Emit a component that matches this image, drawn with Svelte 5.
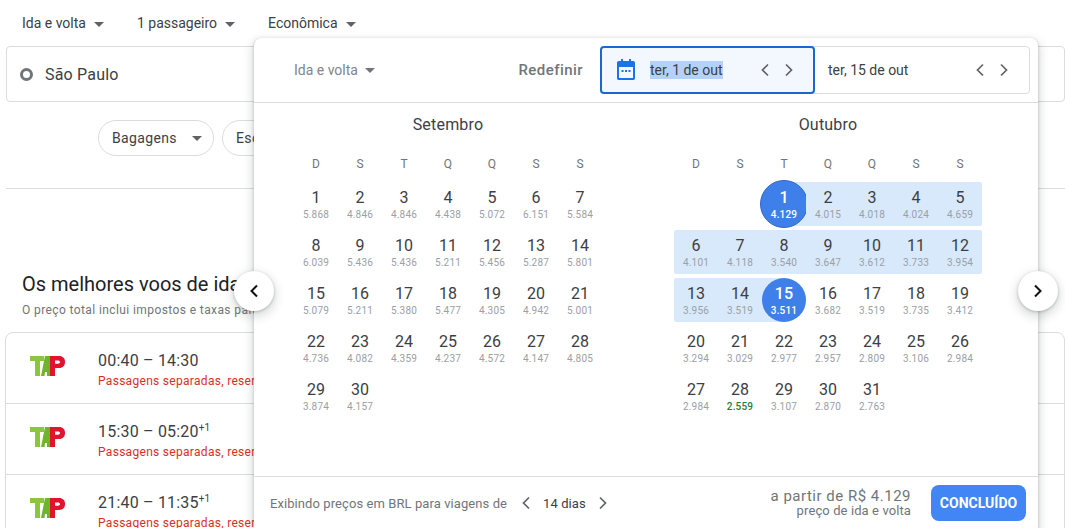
<script>
  const weekdays = ['D', 'S', 'T', 'Q', 'Q', 'S', 'S'];

  const setPrices = ['5.868','4.846','4.846','4.438','5.072','6.151','5.584','6.039','5.436','5.436','5.211','5.456','5.287','5.801','5.079','5.211','5.380','5.477','4.305','4.942','5.001','4.736','4.082','4.359','4.237','4.572','4.147','4.805','3.874','4.157'];
  const outPrices = ['4.129','4.015','4.018','4.024','4.659','4.101','4.118','3.540','3.647','3.612','3.733','3.954','3.956','3.519','3.511','3.682','3.519','3.735','3.412','3.294','3.029','2.977','2.957','2.809','3.106','2.984','2.984','2.559','3.107','2.870','2.763'];

  const months = [
    { name: 'Setembro', offset: 0, prices: setPrices },
    { name: 'Outubro', offset: 2, prices: outPrices, range: [1, 15], cheapest: 28 }
  ];

  const flights = [
    { time: '00:40 – 14:30', plus: false },
    { time: '15:30 – 05:20', plus: true },
    { time: '21:40 – 11:35', plus: true }
  ];

  function dayClass(month, day) {
    if (!month.range) return '';
    const [from, to] = month.range;
    let c = '';
    if (day >= from && day <= to) c += ' in-range';
    if (day === from) c += ' start';
    if (day === to) c += ' end';
    return c;
  }
</script>

{#snippet caret()}
  <svg class="caret" width="10" height="5" viewBox="0 0 10 5"><path d="M0 0h10L5 5z" fill="currentColor" /></svg>
{/snippet}

{#snippet chevron(dir)}
  <svg class="chevron" width="10" height="14" viewBox="0 0 10 14">
    <path d={dir === 'left' ? 'M8 1.500 2.500 7 8 12.500' : 'M2 1.500 7.500 7 2 12.500'} fill="none" stroke="currentColor" stroke-width="1.700" />
  </svg>
{/snippet}

<div class="page">
  <div class="options">
    <span class="opt">Ida e volta {@render caret()}</span>
    <span class="opt">1 passageiro {@render caret()}</span>
    <span class="opt">Econômica {@render caret()}</span>
  </div>

  <div class="search">
    <span class="ring"></span>
    <span>São Paulo</span>
  </div>

  <div class="chips">
    <span class="chip">Bagagens {@render caret()}</span>
    <span class="chip">Escalas {@render caret()}</span>
  </div>

  <hr class="rule" />

  <h2>Os melhores voos de ida</h2>
  <p class="sub">O preço total inclui impostos e taxas para</p>

  <div class="flights">
    {#each flights as f}
      <div class="flight">
        <svg class="tap" width="35" height="20" viewBox="0 0 35 20">
          <path d="M0 0h14v5H10v15H5V5H0z" fill="#8cc63f" />
          <path d="M11 20 15 0h6v20h-4v-4h-2l-.5 4z" fill="#6fb52c" />
          <path d="M20 0h9c4 0 6 2.500 6 6s-2 6-6 6h-4v8h-5z" fill="#e2132e" />
          <path d="M25 4.500h3c1 0 2 .6 2 1.600s-1 1.600-2 1.600h-3z" fill="#fff" />
        </svg>
        <div class="flight-text">
          <div class="time">{f.time}{#if f.plus}<sup>+1</sup>{/if}</div>
          <div class="warn">Passagens separadas, reserve</div>
        </div>
      </div>
    {/each}
  </div>

  <div class="panel">
    <div class="panel-head">
      <span class="trip">Ida e volta {@render caret()}</span>
      <span class="reset">Redefinir</span>
      <div class="dates">
        <div class="date active">
          <svg class="cal" width="20" height="21" viewBox="0 0 20 21">
            <path d="M5 0h2v2h6V0h2v2h2.200c1 0 1.800.8 1.800 1.800v15.400c0 1-.8 1.800-1.800 1.800H2.800c-1 0-1.800-.8-1.800-1.800V3.800C1 2.800 1.800 2 2.800 2H5zM3 8v11h14V8z" fill="#1a73e8" />
            <path d="M5.500 11h2v2h-2zM9 11h2v2H9zM12.500 11h2v2h-2z" fill="#1a73e8" />
          </svg>
          <span class="date-text"><span class="selected">ter, 1 de out</span></span>
          {@render chevron('left')}
          {@render chevron('right')}
        </div>
        <div class="date">
          <span class="date-text">ter, 15 de out</span>
          {@render chevron('left')}
          {@render chevron('right')}
        </div>
      </div>
    </div>

    <div class="months">
      {#each months as m}
        <div class="month">
          <div class="month-name">{m.name}</div>
          <div class="week">
            {#each weekdays as w}<span>{w}</span>{/each}
          </div>
          <div class="days">
            {#each { length: m.offset } as _}<span></span>{/each}
            {#each m.prices as price, i}
              <div class={'day' + dayClass(m, i + 1)}>
                <span class="num">{i + 1}</span>
                <span class="price" class:cheap={m.cheapest === i + 1}>{price}</span>
              </div>
            {/each}
          </div>
        </div>
      {/each}
    </div>

    <div class="panel-foot">
      <span class="showing">Exibindo preços em BRL para viagens de</span>
      <span class="stepper">
        {@render chevron('left')}
        <span class="length">14 dias</span>
        {@render chevron('right')}
      </span>
      <div class="total">
        <div class="from">a partir de R$ 4.129</div>
        <div class="kind">preço de ida e volta</div>
      </div>
      <button class="done">CONCLUÍDO</button>
    </div>
  </div>

  <button class="nav prev" aria-label="Anterior">
    <svg width="10" height="14" viewBox="0 0 10 14"><path d="M8 1.500 2.500 7 8 12.500" fill="none" stroke="#111" stroke-width="2" /></svg>
  </button>
  <button class="nav next" aria-label="Próximo">
    <svg width="10" height="14" viewBox="0 0 10 14"><path d="M2 1.500 7.500 7 2 12.500" fill="none" stroke="#111" stroke-width="2" /></svg>
  </button>
</div>

<style>
  :global(body) {
    margin: 0;
    background: #fff;
  }

  .page {
    position: relative;
    width: 1065px;
    height: 528px;
    overflow: hidden;
    font-family: Roboto, "Liberation Sans", sans-serif;
    color: #3c4043;
  }

  .caret {
    display: inline-block;
    vertical-align: middle;
    color: #5f6368;
  }

  .options {
    display: flex;
    gap: 33px;
    height: 46px;
    align-items: center;
    padding-left: 22px;
    font-size: 14px;
  }

  .opt .caret {
    margin-left: 4.500px;
  }

  .search {
    display: flex;
    align-items: center;
    gap: 12px;
    box-sizing: border-box;
    height: 56px;
    margin-left: 6px;
    padding-left: 13px;
    border: 1px solid #dadce0;
    border-radius: 4px;
    font-size: 16px;
    letter-spacing: 0.2px;
  }

  .ring {
    width: 13px;
    height: 13px;
    box-sizing: border-box;
    border: 3px solid #70757a;
    border-radius: 50%;
  }

  .chips {
    display: flex;
    gap: 8px;
    margin-top: 18px;
    padding-left: 98px;
  }

  .chip {
    display: flex;
    align-items: center;
    justify-content: space-between;
    box-sizing: border-box;
    width: 116px;
    height: 36px;
    padding: 0 11px 0 13px;
    border: 1px solid #dadce0;
    border-radius: 18px;
    font-size: 14px;
    letter-spacing: 0.35px;
  }

  .rule {
    height: 1px;
    margin: 32px 0 0 6px;
    border: 0;
    background: #dadce0;
  }

  h2 {
    margin: 83px 0 0 22px;
    font-size: 20px;
    line-height: 24px;
    font-weight: 400;
    color: #202124;
  }

  .sub {
    margin: 6px 0 0 22px;
    font-size: 12px;
    line-height: 16px;
    letter-spacing: 0.4px;
    color: #70757a;
    white-space: nowrap;
  }

  .flights {
    margin: 14px 0 0 5px;
    border: 1px solid #dadce0;
    border-radius: 8px;
  }

  .flight {
    display: flex;
    align-items: center;
    gap: 33px;
    box-sizing: border-box;
    height: 71px;
    padding-left: 24px;
    padding-bottom: 4px;
    border-bottom: 1px solid #dadce0;
  }

  .flight-text {
    padding-top: 8px;
  }

  .time {
    font-size: 16px;
    line-height: 22px;
    letter-spacing: 0.2px;
    white-space: nowrap;
  }

  .time sup {
    font-size: 10px;
    line-height: 0;
  }

  .warn {
    font-size: 12px;
    line-height: 18px;
    letter-spacing: 0.3px;
    color: #d93025;
    white-space: nowrap;
  }

  .panel {
    position: absolute;
    left: 254px;
    top: 38px;
    width: 784px;
    height: 510px;
    border-radius: 8px;
    background: #fff;
    box-shadow: 0 1px 3px rgba(60, 64, 67, 0.3), 0 4px 8px 3px rgba(60, 64, 67, 0.15);
  }

  .panel-head {
    display: flex;
    align-items: center;
    box-sizing: border-box;
    height: 65px;
    padding: 0 8px 1px 40px;
    border-bottom: 1px solid #dadce0;
  }

  .trip {
    font-size: 14px;
    color: #80868b;
  }

  .trip .caret {
    margin-left: 4px;
    color: #70757a;
  }

  .reset {
    margin-left: auto;
    margin-right: 17px;
    font-size: 15px;
    font-weight: 500;
    letter-spacing: 0.45px;
    color: #70757a;
  }

  .dates {
    display: flex;
    width: 430px;
    height: 48px;
    box-sizing: border-box;
    border: 1px solid #dadce0;
    border-radius: 4px;
  }

  .date {
    display: flex;
    align-items: center;
    flex: 1;
    gap: 14px;
    padding: 0 20px 0 13px;
    font-size: 14px;
    color: #3c4043;
  }

  .date.active {
    flex: 0 0 215px;
    box-sizing: border-box;
    margin: -1px 0 -1px -1px;
    padding-left: 14px;
    padding-right: 19px;
    border: 2px solid #1967d2;
    border-radius: 4px;
    background: #f3f7fe;
  }

  .date-text {
    flex: 1;
  }

  .selected {
    background: #b4d2f7;
    padding: 1px 0;
  }

  .chevron {
    color: #5f6368;
    flex: none;
  }

  .months {
    display: flex;
    gap: 72px;
    padding: 0 0 0 40px;
    height: 374px;
    box-sizing: border-box;
    border-bottom: 1px solid #dadce0;
  }

  .month {
    width: 308px;
  }

  .month-name {
    padding-top: 12px;
    height: 20px;
    line-height: 20px;
    text-align: center;
    font-size: 16px;
    letter-spacing: 0.2px;
  }

  .week {
    display: grid;
    grid-template-columns: repeat(7, 44px);
    margin-top: 20px;
    height: 18px;
    line-height: 18px;
    text-align: center;
    font-size: 12px;
    color: #70757a;
  }

  .days {
    display: grid;
    grid-template-columns: repeat(7, 44px);
    grid-auto-rows: 44px;
    row-gap: 4px;
    margin-top: 9px;
  }

  .day {
    position: relative;
    display: flex;
    flex-direction: column;
    align-items: center;
    padding-top: 6px;
    box-sizing: border-box;
  }

  .day.in-range {
    background: #d8e9fb;
  }

  .day.in-range:nth-child(7n + 1) {
    border-radius: 2px 0 0 2px;
  }

  .day.in-range:nth-child(7n) {
    border-radius: 0 2px 2px 0;
  }

  .day.start {
    background: linear-gradient(to right, transparent 50%, #d8e9fb 50%);
  }

  .day.end {
    background: linear-gradient(to right, #d8e9fb 50%, transparent 50%);
  }

  .day.start::before,
  .day.end::before {
    content: '';
    position: absolute;
    inset: 0;
    border-radius: 50%;
    background: #3f7fe9;
  }

  .day.start::before {
    inset: -2px;
    border: 1px solid #3267c4;
  }

  .num {
    position: relative;
    font-size: 16px;
    line-height: 20px;
    letter-spacing: 0.1px;
  }

  .price {
    position: relative;
    font-size: 10px;
    line-height: 14px;
    letter-spacing: 0.15px;
    color: #9aa0a6;
  }

  .price.cheap {
    color: #188038;
    font-weight: 500;
  }

  .day.start .num,
  .day.end .num,
  .day.start .price,
  .day.end .price {
    color: #fff;
    font-weight: 500;
  }

  .panel-foot {
    display: flex;
    align-items: center;
    height: 52px;
    padding: 0 12px 0 16px;
  }

  .showing {
    font-size: 13px;
    letter-spacing: 0.08px;
    color: #70757a;
  }

  .stepper {
    display: flex;
    align-items: center;
    margin-left: 14px;
    gap: 12px;
    font-size: 13px;
  }

  .length {
    color: #3c4043;
    letter-spacing: 0.1px;
  }

  .total {
    margin-left: auto;
    margin-right: 20px;
    text-align: right;
    color: #70757a;
  }

  .from {
    font-size: 15px;
    line-height: 16px;
    letter-spacing: 0.5px;
  }

  .kind {
    font-size: 13px;
    line-height: 14px;
    letter-spacing: 0.1px;
  }

  .done {
    width: 95px;
    height: 36px;
    padding: 0;
    border: 0;
    border-radius: 8px;
    background: #4285f4;
    color: #fff;
    font: 700 14px Roboto, sans-serif;
  }

  .nav {
    position: absolute;
    top: 271px;
    width: 40px;
    height: 40px;
    padding: 0;
    display: flex;
    align-items: center;
    justify-content: center;
    border: 0;
    border-radius: 50%;
    background: #fff;
    box-shadow: 0 1px 3px rgba(60, 64, 67, 0.3), 0 4px 8px 3px rgba(60, 64, 67, 0.15);
  }

  .prev {
    left: 234px;
  }

  .next {
    left: 1018px;
  }
</style>
